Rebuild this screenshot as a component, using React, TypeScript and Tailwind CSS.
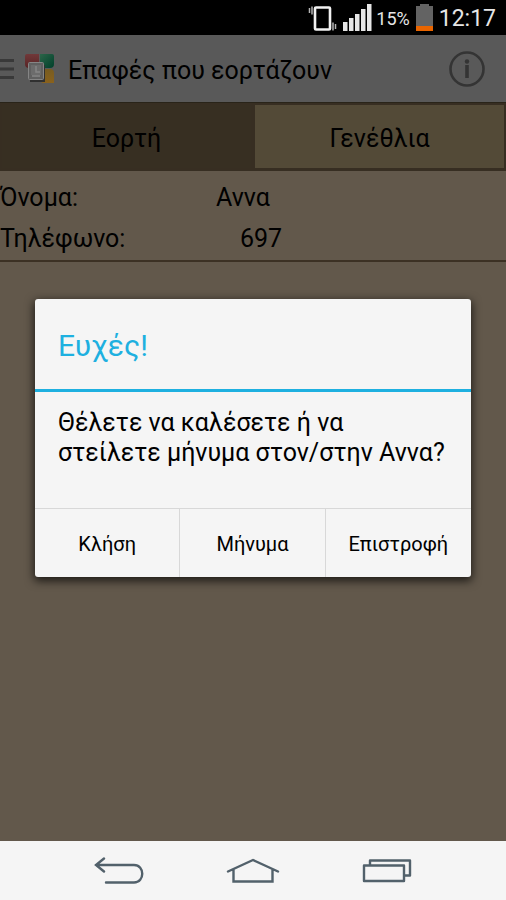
import React from 'react';

function StatusBar() {
  return (
    <div className="flex h-[35px] shrink-0 items-center justify-end bg-black pr-2.5 text-[#e6e6e6]">
      <svg width="29" height="28" viewBox="0 0 29 28" className="mr-1.5" aria-hidden="true">
        <rect x="7" y="3.5" width="15" height="22" rx="1" fill="none" stroke="#f2f2f2" strokeWidth="2.6" />
        <path d="M1.5 4v5M4 2.5v8M25 18.500v8M27.500 20v5" stroke="#b5b5b5" strokeWidth="1.500" />
      </svg>
      <svg width="29" height="28" viewBox="0 0 29 28" className="mr-1" fill="#e6e6e6" aria-hidden="true">
        <path d="M0 18h4.500v9h-4.500zM6 14h4.500v13h-4.500zM12 10h4.500v17h-4.500zM18 5h4.500v22h-4.500zM24 0h4.500v27h-4.500z" />
      </svg>
      <span className="pt-0.5 text-[18px] leading-6">15%</span>
      <svg width="17" height="28" viewBox="0 0 17 28" className="ml-1.5 mr-1.5" aria-hidden="true">
        <path d="M0 2h4V0h9v2h4v21H0z" fill="#636363" />
        <path d="M0 22h17v5H0z" fill="#e96500" />
      </svg>
      <span className="pt-0.5 text-[23px] leading-7">12:17</span>
    </div>
  );
}

function AppIcon() {
  return (
    <svg width="30" height="30" viewBox="0 0 30 30" className="ml-[11px] mr-[13px]" aria-hidden="true">
      <defs>
        <linearGradient id="red" x2="0" y2="1"><stop stopColor="#713839" /><stop offset="1" stopColor="#582325" /></linearGradient>
        <linearGradient id="green" x2="1" y2="1"><stop stopColor="#2c6549" /><stop offset="1" stopColor="#00402a" /></linearGradient>
        <linearGradient id="gold" x2="0" y2="1"><stop stopColor="#775c21" /><stop offset="1" stopColor="#8a621c" /></linearGradient>
      </defs>
      <path d="M0 2q0-2 2-2h12v14H4q-4 0-4-4z" fill="url(#red)" />
      <path d="M15 0h12q2 0 2 2v8q0 4-4 4H15z" fill="url(#green)" />
      <path d="M15 15h10q4 0 4 4v10H19q-4 0-4-4z" fill="url(#gold)" />
      <path d="M5 11h15v17H5z" fill="#303030" />
      <rect x="3.500" y="8.500" width="15" height="17" rx="1" fill="#606060" stroke="#858585" />
      <path d="M6 11h10v10H6z" fill="#6c6c6c" />
      <path d="M11 12v6h4M7 22h8" fill="none" stroke="#858585" strokeWidth="1.500" />
    </svg>
  );
}

function ActionBar() {
  return (
    <header className="flex h-[67px] shrink-0 items-center bg-[#595959]">
      <button type="button" aria-label="Μενού" className="flex items-center">
        <svg width="14" height="22" viewBox="0 0 14 22" aria-hidden="true">
          <path d="M0 2.500h14M0 11h14M0 19.500h14" stroke="#393939" strokeWidth="3" />
        </svg>
        <AppIcon />
      </button>
      <h1 className="flex-1 pt-1 text-[25px] leading-8">Επαφές που εορτάζουν</h1>
      <button type="button" aria-label="Πληροφορίες" className="mr-[21px]">
        <svg width="36" height="36" viewBox="0 0 36 36" fill="none" aria-hidden="true">
          <circle cx="18" cy="18" r="16.500" stroke="#343434" strokeWidth="2.600" />
          <path d="M18 14v13" stroke="#343434" strokeWidth="3.600" />
          <circle cx="18" cy="10.500" r="2.200" fill="#343434" />
        </svg>
      </button>
    </header>
  );
}

function Tabs() {
  return (
    <nav role="tablist" className="flex h-[69px] shrink-0 border-t border-[#292419] bg-[#372e22] text-[25px] leading-8">
      <button type="button" role="tab" aria-selected="true" className="flex-1 border-2 border-b-3 border-[#372e22] bg-[#372f22] pt-1">
        Εορτή
      </button>
      <button
        type="button"
        role="tab"
        aria-selected="false"
        className="flex-1 border-2 border-b-3 border-[#372e22] bg-[#534a37] pt-1"
      >
        Γενέθλια
      </button>
    </nav>
  );
}

function ContactCard() {
  return (
    <dl className="border-b-2 border-[#3c3124] pt-1.5 pb-px text-[25px] leading-[41px]">
      <div className="flex">
        <dt className="w-[216px]">Όνομα:</dt>
        <dd>Αννα</dd>
      </div>
      <div className="flex">
        <dt className="w-60">Τηλέφωνο:</dt>
        <dd>697</dd>
      </div>
    </dl>
  );
}

function WishDialog() {
  return (
    <section
      role="dialog"
      aria-modal="true"
      aria-labelledby="dialog-title"
      className="w-full rounded-[3px] bg-[#f5f5f5] shadow-[0_3px_10px_1px_rgba(0,0,0,0.7)]"
    >
      <h2 id="dialog-title" className="border-b-3 border-[#1eb0e0] px-[23px] pb-6 pt-7 text-[30px] leading-[38px] text-[#1eb0e0]">
        Ευχές!
      </h2>
      <p className="px-[23px] pb-10 pt-4 text-[25px] leading-[30px]">
        Θέλετε να καλέσετε ή να
        <br />
        <span className="whitespace-nowrap">στείλετε μήνυμα στον/στην Αννα?</span>
      </p>
      <div className="grid h-[69px] grid-cols-3 divide-x divide-[#d8d8d8] border-t border-[#d8d8d8] text-[20px] leading-6">
        <button type="button" className="pt-0.5">Κλήση</button>
        <button type="button" className="pt-0.5">Μήνυμα</button>
        <button type="button" className="pt-0.5">Επιστροφή</button>
      </div>
    </section>
  );
}

function NavigationBar() {
  return (
    <nav className="flex h-[59px] shrink-0 items-center justify-center gap-[82px] bg-[#f5f5f5] text-[#52616b]">
      <button type="button" aria-label="Πίσω">
        <svg width="50" height="28" viewBox="0 0 50 28" fill="none" stroke="currentColor" strokeWidth="2.400" strokeLinecap="round" aria-hidden="true">
          <path d="M10 1.500L2 8l8 6.500M2 8h38c11 0 11 17.500 0 17.500H12" />
        </svg>
      </button>
      <button type="button" aria-label="Αρχική">
        <svg width="54" height="28" viewBox="0 0 54 28" fill="none" stroke="currentColor" strokeWidth="2.400" strokeLinecap="round" aria-hidden="true">
          <path d="M2 14.500L27 3l25 11.500M7.500 12.500v12h39v-12" />
        </svg>
      </button>
      <button type="button" aria-label="Πρόσφατα">
        <svg width="50" height="28" viewBox="0 0 50 28" fill="none" stroke="currentColor" strokeWidth="2.400" strokeLinejoin="round" aria-hidden="true">
          <path d="M2 8.500h40V24H2zM8 8.500V3.500h40V18.500h-6" />
        </svg>
      </button>
    </nav>
  );
}

export default function App() {
  return (
    <div className="flex min-h-screen flex-col bg-[#62584b] font-[Roboto,'Noto_Sans',sans-serif] text-black">
      <StatusBar />
      <div className="relative flex flex-1 flex-col">
        <ActionBar />
        <Tabs />
        <main className="flex-1 pb-80">
          <ContactCard />
        </main>
        <div className="absolute inset-0 flex items-center px-[35px]">
          <WishDialog />
        </div>
      </div>
      <NavigationBar />
    </div>
  );
}
